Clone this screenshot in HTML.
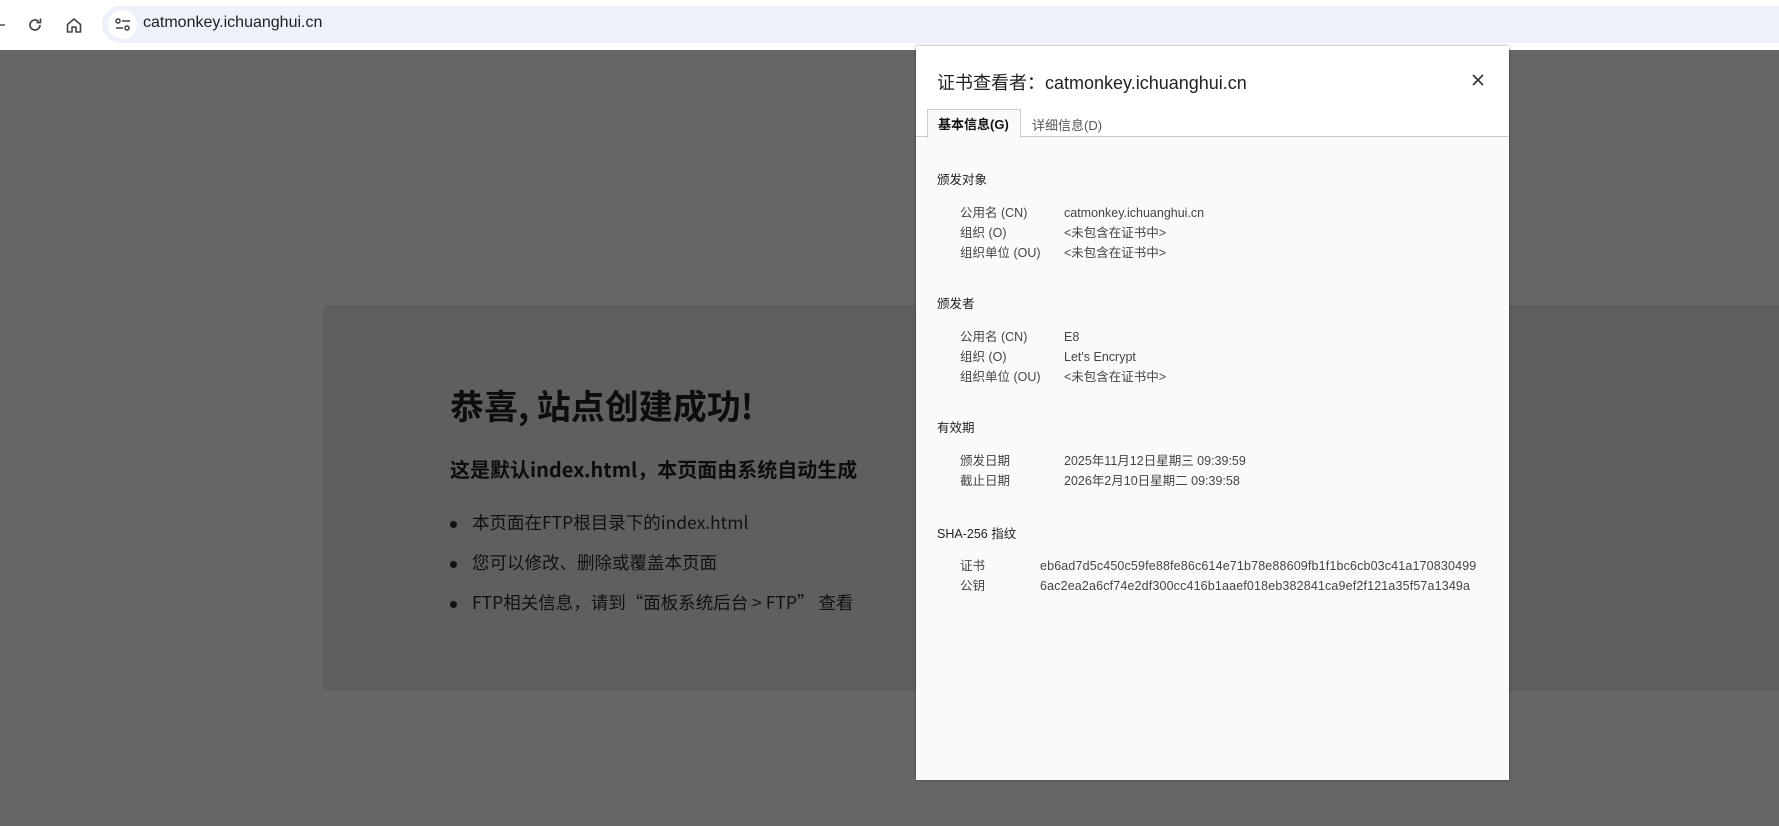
<!DOCTYPE html>
<html><head><meta charset="utf-8"><style>
*{margin:0;padding:0;box-sizing:border-box}
body{width:1779px;height:826px;overflow:hidden;background:#676767;font-family:"Liberation Sans","Noto Sans CJK SC",sans-serif;position:relative}
.top{position:absolute;left:0;top:0;width:1779px;height:50px;background:#fff}
.pill{position:absolute;left:102px;top:6px;width:1700px;height:37px;border-radius:19px;background:#edf1fa}
.pill .ic{position:absolute;left:6px;top:4px;width:29px;height:29px;border-radius:50%;background:#fff}
.url{position:absolute;left:143px;top:14px;font-size:16px;color:#1f1f1f}
.a{position:absolute;white-space:nowrap}
.card{position:absolute;left:323px;top:305px;width:1500px;height:386px;background:#5f5f5f;border-radius:6px}
.cj{font-family:"Noto Sans CJK SC",sans-serif}
.dlg{position:absolute;left:916px;top:46px;width:593px;height:734px;background:#fafafa;box-shadow:0 0 3px rgba(0,0,0,.4)}
.dh{position:absolute;left:0;top:0;width:593px;height:91px;background:#fff}
.d{font-size:12.5px;color:#444}
.h{font-size:12.5px;color:#222}
.hash{letter-spacing:0.15px}
</style></head><body>
<div class="top">
<svg class="a" style="left:0;top:19px" width="6" height="12"><path d="M0 6h5" stroke="#555" stroke-width="1.6"/></svg>
<svg class="a" style="left:26px;top:16px" width="18" height="18" viewBox="0 0 18 18"><path d="M14 9a5 5 0 1 1-1.6-3.7" fill="none" stroke="#444" stroke-width="1.7"/><path d="M14.5 2.5v4h-4" fill="none" stroke="#444" stroke-width="1.7"/></svg>
<svg class="a" style="left:65px;top:16px" width="18" height="18" viewBox="0 0 18 18"><path d="M2.5 8.5L9 3l6.5 5.5V16h-4.5v-5h-4v5H2.5z" fill="none" stroke="#444" stroke-width="1.6" stroke-linejoin="round"/></svg>
<div class="pill"><div class="ic"><svg style="position:absolute;left:7px;top:8px" width="16" height="14" viewBox="0 0 16 14"><circle cx="3" cy="3" r="2" fill="none" stroke="#444" stroke-width="1.5"/><path d="M7 3h8M1 10h7" stroke="#444" stroke-width="1.5"/><circle cx="12" cy="10" r="2" fill="none" stroke="#444" stroke-width="1.5"/></svg></div></div>
<div class="url">catmonkey.ichuanghui.cn</div>
</div>
<div class="card"></div>
<div class="a cj" style="left:450px;top:382px;font-size:34px;font-weight:bold;color:#0d0d0d;line-height:46px">恭喜, 站点创建成功!</div>
<div class="a cj" style="left:450px;top:455px;font-size:20px;font-weight:bold;color:#0d0d0d;line-height:28px">这是默认index.html，本页面由系统自动生成</div>
<div class="a cj" style="left:450px;top:503px;font-size:17.5px;color:#111;line-height:40px">
<div><span style="display:inline-block;width:7px;height:7px;border-radius:50%;background:#111;vertical-align:middle;margin-right:15px"></span>本页面在FTP根目录下的index.html</div>
<div><span style="display:inline-block;width:7px;height:7px;border-radius:50%;background:#111;vertical-align:middle;margin-right:15px"></span>您可以修改、删除或覆盖本页面</div>
<div><span style="display:inline-block;width:7px;height:7px;border-radius:50%;background:#111;vertical-align:middle;margin-right:15px"></span>FTP相关信息，请到“面板系统后台 &gt; FTP” 查看</div>
</div>
<div class="dlg">
<div class="dh"></div>
<div class="a" style="left:21px;top:23px;font-size:18px;color:#222">证书查看者：catmonkey.ichuanghui.cn</div>
<svg class="a" style="left:555px;top:27px" width="14" height="14" viewBox="0 0 14 14"><path d="M2 2l10 10M12 2L2 12" stroke="#333" stroke-width="1.6"/></svg>
<div class="a" style="left:0;top:90px;width:593px;height:1px;background:#ccc"></div>
<div class="a" style="left:11px;top:63px;width:94px;height:29px;background:#fafafa;border:1px solid #ccc;border-bottom:none"></div>
<div class="a" style="left:22px;top:68px;font-size:13px;font-weight:bold;color:#111">基本信息(G)</div>
<div class="a" style="left:116px;top:69px;font-size:13px;color:#555">详细信息(D)</div>
<div class="a h" style="left:21px;top:123px">颁发对象</div>
<div class="a d" style="left:44px;top:157px;line-height:20px">公用名 (CN)<br>组织 (O)<br>组织单位 (OU)</div>
<div class="a d" style="left:148px;top:157px;line-height:20px">catmonkey.ichuanghui.cn<br>&lt;未包含在证书中&gt;<br>&lt;未包含在证书中&gt;</div>
<div class="a h" style="left:21px;top:247px">颁发者</div>
<div class="a d" style="left:44px;top:281px;line-height:20px">公用名 (CN)<br>组织 (O)<br>组织单位 (OU)</div>
<div class="a d" style="left:148px;top:281px;line-height:20px">E8<br>Let's Encrypt<br>&lt;未包含在证书中&gt;</div>
<div class="a h" style="left:21px;top:371px">有效期</div>
<div class="a d" style="left:44px;top:405px;line-height:20px">颁发日期<br>截止日期</div>
<div class="a d" style="left:148px;top:405px;line-height:20px">2025年11月12日星期三 09:39:59<br>2026年2月10日星期二 09:39:58</div>
<div class="a h" style="left:21px;top:477px">SHA-256 指纹</div>
<div class="a d" style="left:44px;top:510px;line-height:20px">证书<br>公钥</div>
<div class="a d hash" style="left:124px;top:510px;line-height:20px">eb6ad7d5c450c59fe88fe86c614e71b78e88609fb1f1bc6cb03c41a170830499<br>6ac2ea2a6cf74e2df300cc416b1aaef018eb382841ca9ef2f121a35f57a1349a</div>
</div>
</body></html>
